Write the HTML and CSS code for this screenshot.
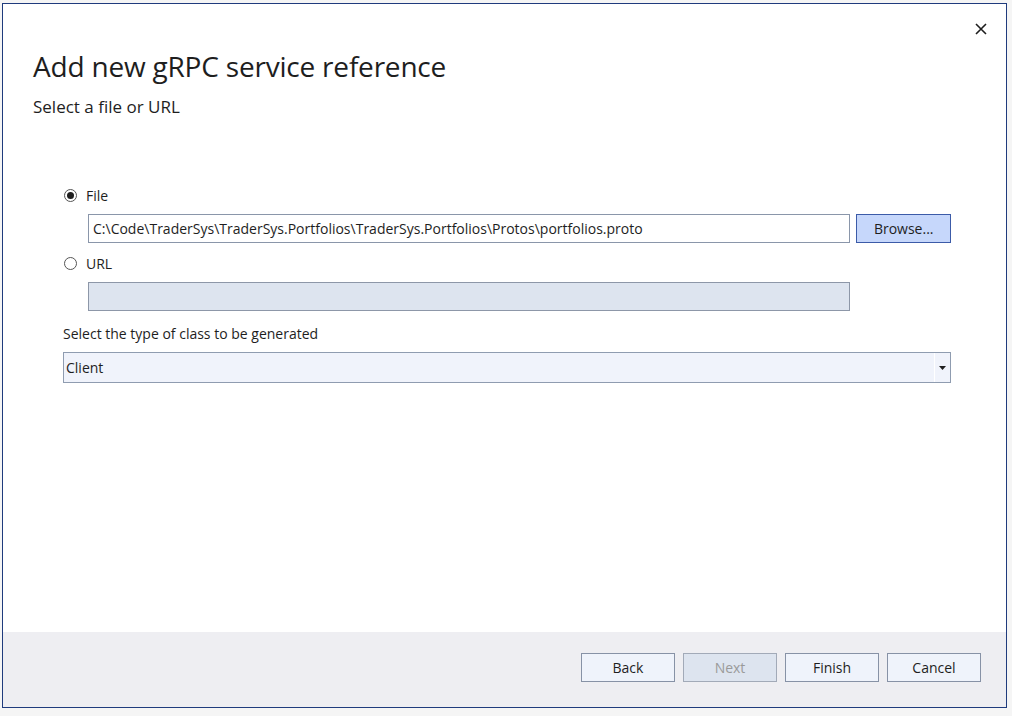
FILE: index.html
```html
<!DOCTYPE html>
<html>
<head>
<meta charset="utf-8">
<link rel="stylesheet" href="styles.css">
</head>
<body>
<div class="dialog">
  <div class="main">
    <button class="close" aria-label="Close">
      <svg width="12" height="12" viewBox="0 0 12 12"><path d="M1 1 L11 11 M11 1 L1 11" stroke="#1e1e1e" stroke-width="1.6" fill="none"/></svg>
    </button>
    <h1 class="title">Add new gRPC service reference</h1>
    <div class="subtitle">Select a file or URL</div>
    <div class="form">
      <label class="radio-row">
        <span class="radio checked"></span>
        <span class="radio-label">File</span>
      </label>
      <div class="input-row">
        <div class="textbox">C:\Code\TraderSys\TraderSys.Portfolios\TraderSys.Portfolios\Protos\portfolios.proto</div>
        <button class="btn btn-primary">Browse...</button>
      </div>
      <label class="radio-row">
        <span class="radio"></span>
        <span class="radio-label">URL</span>
      </label>
      <div class="input-row">
        <div class="textbox disabled"></div>
      </div>
      <div class="field-label">Select the type of class to be generated</div>
      <div class="select">
        <span class="select-value">Client</span>
        <span class="select-arrow"><svg width="8" height="4" viewBox="0 0 8 4"><path d="M0 0 H7 L3.5 4 Z" fill="#1e1e1e"/></svg></span>
      </div>
    </div>
  </div>
  <div class="footer">
    <button class="btn">Back</button>
    <button class="btn btn-disabled">Next</button>
    <button class="btn">Finish</button>
    <button class="btn">Cancel</button>
  </div>
</div>
</body>
</html>
```
FILE: styles.css
```css
html, body {
  margin: 0;
  padding: 0;
}
body {
  background: #f5f5f5;
  width: 1012px;
  height: 716px;
  font-family: "Open Sans", "Noto Sans", sans-serif;
  color: #1e1e1e;
  overflow: hidden;
}
.dialog {
  margin: 3px 0 0 2px;
  width: 1003px;
  height: 703px;
  border: 1px solid #1f3b7d;
  background: #ffffff;
  display: flex;
  flex-direction: column;
}
.main {
  flex: 1;
  position: relative;
  padding: 0 55px 0 30px;
}
.close {
  position: absolute;
  top: 17px;
  right: 17px;
  width: 16px;
  height: 16px;
  padding: 0;
  border: 0;
  background: transparent;
  display: flex;
  align-items: center;
  justify-content: center;
}
.title {
  margin: 43px 0 0 0;
  font-weight: 400;
  font-size: 28px;
  line-height: 38px;
  letter-spacing: -0.2px;
}
.subtitle {
  margin-top: 10px;
  font-size: 17px;
  line-height: 24px;
}
.form {
  margin-top: 65px;
  padding-left: 30px;
  display: flex;
  flex-direction: column;
}
.radio-row {
  display: flex;
  align-items: center;
  height: 22px;
  gap: 9px;
  padding-left: 1px;
}
.radio {
  width: 11px;
  height: 11px;
  border: 1px solid #555;
  border-radius: 50%;
  position: relative;
}
.radio.checked::after {
  content: "";
  position: absolute;
  left: 2px;
  top: 2px;
  width: 7px;
  height: 7px;
  border-radius: 50%;
  background: #1e1e1e;
}
.radio-label, .field-label {
  font-size: 14px;
}
.input-row {
  display: flex;
  gap: 6px;
  padding-left: 25px;
  margin: 8px 0 9px 0;
}
.textbox {
  width: 760px;
  height: 27px;
  border: 1px solid #8a96aa;
  box-sizing: content-box;
  font-size: 14px;
  line-height: 27px;
  padding-left: 4px;
  white-space: nowrap;
  overflow: hidden;
}
.textbox.disabled {
  width: 756px;
  background: #dde4ef;
  border-color: #8d97a8;
}
.btn {
  width: 94px;
  height: 29px;
  box-sizing: border-box;
  border: 1px solid #8792a6;
  background: #eff3fb;
  font-family: inherit;
  font-size: 14px;
  color: #1e1e1e;
  padding: 0;
}
.btn-primary {
  width: 95px;
  background: #c6d7fb;
  border-color: #3c5ba8;
}
.btn-disabled {
  background: #dde4ef;
  border-color: #a2aab8;
  color: #9a9a9a;
}
.field-label {
  margin-top: 4px;
  line-height: 20px;
}
.select {
  margin-top: 8px;
  height: 29px;
  border: 1px solid #8f9cb0;
  background: #f0f3fb;
  display: flex;
  align-items: center;
  position: relative;
  font-size: 14px;
}
.select-value {
  flex: 1;
  padding-left: 2px;
}
.select-arrow {
  width: 15px;
  height: 29px;
  border-left: 1px solid #ffffff;
  display: flex;
  align-items: center;
  justify-content: center;
}
.footer {
  height: 75px;
  background: #eeeef2;
  display: flex;
  justify-content: flex-end;
  align-items: flex-start;
  gap: 8px;
  padding: 21px 25px 0 0;
  box-sizing: border-box;
}
```
